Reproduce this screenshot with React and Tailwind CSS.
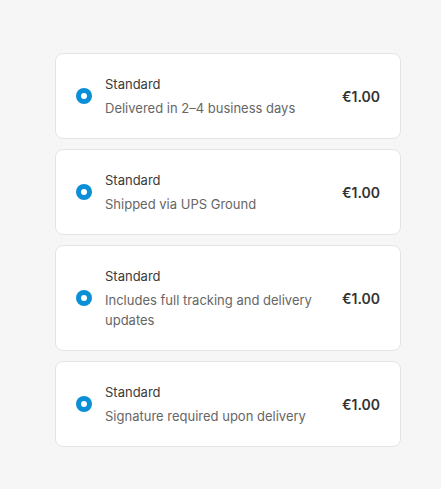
import React from "react";

const options = [
  { title: "Standard", desc: "Delivered in 2–4 business days", price: "€1.00" },
  { title: "Standard", desc: "Shipped via UPS Ground", price: "€1.00" },
  { title: "Standard", desc: "Includes full tracking and delivery updates", price: "€1.00" },
  { title: "Standard", desc: "Signature required upon delivery", price: "€1.00" },
];

export default function App() {
  return (
    <div
      className="min-h-[489px] w-[441px] bg-[#f6f6f6] pt-[53px] pl-[55px]"
      style={{ fontFamily: "Inter, 'Noto Sans', sans-serif" }}
    >
      <div className="flex w-[346px] flex-col gap-2.5">
        {options.map((o, i) => (
          <div
            key={i}
            className="flex items-center gap-[13px] rounded-lg border border-[#e4e4e4] bg-white p-5"
          >
            <div className="flex h-4 w-4 shrink-0 items-center justify-center rounded-full bg-[#0b8fd6]">
              <div className="h-1.5 w-1.5 rounded-full bg-white" />
            </div>
            <div className="min-w-0 flex-1 pr-3">
              <div className="text-[13px] leading-5 text-[#3a3a3a]">{o.title}</div>
              <div className="mt-1 text-[13px] leading-5 text-[#666666]">{o.desc}</div>
            </div>
            <div className="shrink-0 text-[14px] font-semibold text-[#333333]">{o.price}</div>
          </div>
        ))}
      </div>
    </div>
  );
}
